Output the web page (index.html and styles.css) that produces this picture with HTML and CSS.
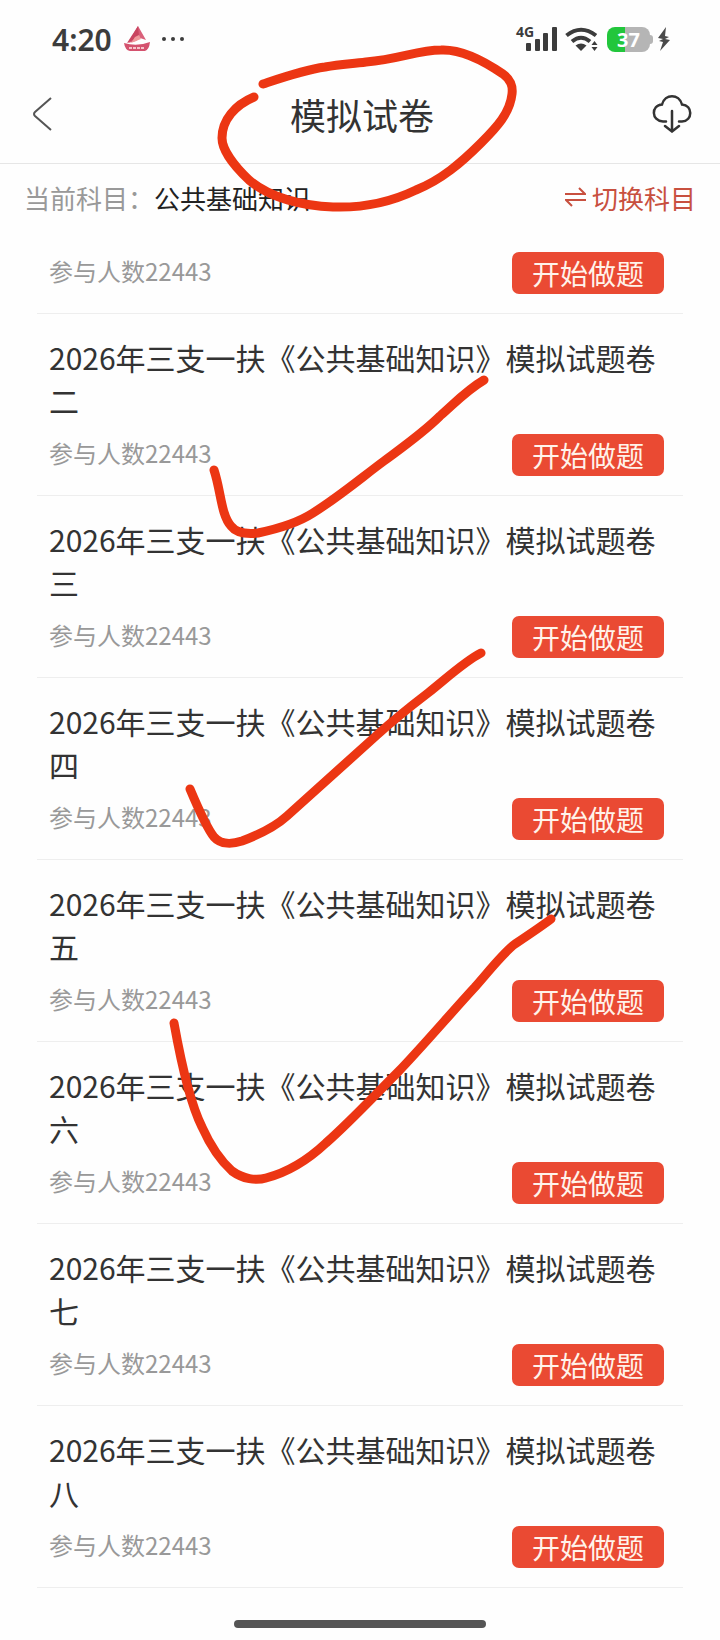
FILE: index.html
```
<!DOCTYPE html>
<html lang="zh-CN">
<head>
    <meta charset="UTF-8">
    <meta name="viewport" content="width=device-width, initial-scale=1.0">
    <title>模拟试卷</title>
    <link rel="stylesheet" href="styles.css">
</head>
<body>
    <div class="status-bar">
        <div class="status-left">
            <span class="time">4:20</span>
            <svg class="boat" width="28" height="28" viewBox="0 0 28 28">
                <path d="M15 1 L23 15 L17 13 L13 16 L5 18 Z" fill="#d9607a"/>
                <path d="M15 1 L16 11 L8 16 L4 18 Z" fill="#c94560"/>
                <path d="M12 12 L16 10 L18 14 L13 16 L8 18 Z" fill="#f09a9c"/>
                <path d="M1 18 Q14 22 27 17 Q26 25 22 26 H7 Q2 25 1 18 Z" fill="#d4526e"/>
                <path d="M6 23 H22" stroke="#f6c3c9" stroke-width="2" stroke-dasharray="3 1"/>
            </svg>
            <svg width="22" height="6" viewBox="0 0 22 6" fill="#3c3c3c">
                <circle cx="2" cy="3" r="2"/>
                <circle cx="11" cy="3" r="2"/>
                <circle cx="20" cy="3" r="2"/>
            </svg>
        </div>
        <div class="status-right">
            <div class="signal">
                <span class="network">4G</span>
                <svg width="31" height="25" viewBox="0 0 31 25" fill="#3c3c3c">
                    <rect x="0" y="16" width="5" height="8" rx="1"/>
                    <rect x="9" y="12" width="5" height="12" rx="1"/>
                    <rect x="17" y="6" width="5" height="18" rx="1"/>
                    <rect x="26" y="0" width="5" height="24" rx="1"/>
                </svg>
            </div>
            <svg width="34" height="25" viewBox="0 0 34 25">
                <path d="M1.500 8.500 Q16 -3 31 8.500 M7 14.500 Q16 7 25 14.500" fill="none" stroke="#3c3c3c" stroke-width="4"/>
                <path d="M10.500 18.500 Q16 14.500 21.500 18.500 L16 24 Z" fill="#3c3c3c"/>
                <path d="M26.500 18 L29.500 14 L32.500 18 Z M26.500 20 L29.500 24 L32.500 20 Z" fill="#3c3c3c"/>
            </svg>
            <div class="battery"><span>37</span></div>
            <svg width="12" height="24" viewBox="0 0 12 24">
                <path d="M8 0 L0 11 L5 12 L1 14 L5 15 L2 24 L12 13 L7 12 L11 10 L7 9 Z" fill="#4a4a4a"/>
            </svg>
        </div>
    </div>

    <header class="header">
        <button class="icon-btn" aria-label="返回">
            <svg width="20" height="34" viewBox="0 0 20 34">
                <path d="M19 1 L3 15 Q1 17 3 19 L19 33" fill="none" stroke="#555" stroke-width="2"/>
            </svg>
        </button>
        <h1>模拟试卷</h1>
        <button class="icon-btn" aria-label="下载">
            <svg width="40" height="38" viewBox="0 0 40 38" fill="none" stroke="#333" stroke-width="2.500" stroke-linecap="round">
                <path d="M14 26.500 H11 C-1 26 -1 10 10 9.500 C13 -1.500 27 -1.500 30 9.500 C41 10 41 26 30 26.500 H27"/>
                <path d="M20 16 V36 M13 31 L20 36.500 L27 31"/>
            </svg>
        </button>
    </header>

    <div class="subject">
        <span class="subject-label">当前科目：</span>
        <span class="subject-name">公共基础知识</span>
        <button class="switch">
            <svg width="21" height="20" viewBox="0 0 21 20" fill="none" stroke="#c8503f" stroke-width="2">
                <path d="M0 7 H20 L14 1 M21 13 H1 L7 19"/>
            </svg>
            切换科目
        </button>
    </div>

    <main class="list">
        <div class="item item-cut">
            <div class="row">
                <span class="count">参与人数22443</span>
                <button class="btn">开始做题</button>
            </div>
        </div>
        <div class="item">
            <h2>2026年三支一扶《公共基础知识》模拟试题卷二</h2>
            <div class="row">
                <span class="count">参与人数22443</span>
                <button class="btn">开始做题</button>
            </div>
        </div>
        <div class="item">
            <h2>2026年三支一扶《公共基础知识》模拟试题卷三</h2>
            <div class="row">
                <span class="count">参与人数22443</span>
                <button class="btn">开始做题</button>
            </div>
        </div>
        <div class="item">
            <h2>2026年三支一扶《公共基础知识》模拟试题卷四</h2>
            <div class="row">
                <span class="count">参与人数22443</span>
                <button class="btn">开始做题</button>
            </div>
        </div>
        <div class="item">
            <h2>2026年三支一扶《公共基础知识》模拟试题卷五</h2>
            <div class="row">
                <span class="count">参与人数22443</span>
                <button class="btn">开始做题</button>
            </div>
        </div>
        <div class="item">
            <h2>2026年三支一扶《公共基础知识》模拟试题卷六</h2>
            <div class="row">
                <span class="count">参与人数22443</span>
                <button class="btn">开始做题</button>
            </div>
        </div>
        <div class="item">
            <h2>2026年三支一扶《公共基础知识》模拟试题卷七</h2>
            <div class="row">
                <span class="count">参与人数22443</span>
                <button class="btn">开始做题</button>
            </div>
        </div>
        <div class="item">
            <h2>2026年三支一扶《公共基础知识》模拟试题卷八</h2>
            <div class="row">
                <span class="count">参与人数22443</span>
                <button class="btn">开始做题</button>
            </div>
        </div>
    </main>

    <div class="home-bar"></div>

    <!-- Red pen marks over the page -->
    <svg class="marks" viewBox="0 0 720 1640" preserveAspectRatio="xMidYMin meet">
        <path d="M263 84 C284 77 304 70 325 67 C342 64 352 64 366 62 C400 59 418 50 441 50 C462 49 487 63 503 74 C511 80 513 86 512 94 C510 113 497 127 481 143 C461 163 441 180 416 190 C389 203 361 208 333 207 C303 206 270 198 249 180 C233 165 222 149 222 138 C222 120 235 105 254 97"/>
        <path d="M214 470 C221 491 221 515 231 526 C237 534 249 534 258 533 C277 529 296 524 313 513 C340 496 361 478 384 461 C407 444 424 432 440 416 C457 401 467 390 484 380"/>
        <path d="M190 789 C198 808 206 827 214 837 C221 845 233 844 242 841 C258 835 275 827 287 816 C316 790 346 763 377 735 C398 716 411 706 428 693 C447 678 465 661 481 653"/>
        <path d="M174 1023 C181 1062 190 1103 202 1127 C211 1147 222 1162 232 1171 C243 1179 256 1181 266 1178 C289 1172 310 1158 326 1143 C351 1121 374 1096 398 1072 C423 1046 451 1013 475 987 C490 970 503 953 515 944 C530 934 542 926 551 919"/>
    </svg>
</body>
</html>
```
FILE: styles.css
```
* {
    margin: 0;
    padding: 0;
    box-sizing: border-box;
}

body {
    position: relative;
    min-height: 100vh;
    background: #fefefe;
    color: #333;
    font-family: 'Noto Sans CJK SC', sans-serif;
}

button {
    border: none;
    background: none;
    font-family: inherit;
    cursor: pointer;
}

svg {
    display: block;
}

h1,
h2 {
    font-weight: 400;
}

/* Status bar */
.status-bar {
    display: flex;
    justify-content: space-between;
    align-items: center;
    height: 78px;
    padding: 0 50px 0 52px;
    color: #3c3c3c;
    font-family: 'Noto Sans', sans-serif;
}

.status-left,
.status-right {
    display: flex;
    align-items: center;
}

.status-left {
    gap: 11px;
}

.status-right {
    gap: 8px;
}

.time {
    font-size: 30px;
    font-weight: 600;
}

.signal {
    display: flex;
    align-items: flex-start;
}

.network {
    width: 10px;
    font-size: 14px;
    line-height: 10px;
    font-weight: 700;
    white-space: nowrap;
}

.battery {
    position: relative;
    width: 43px;
    height: 25px;
    border-radius: 8px;
    background: linear-gradient(90deg, #22c63c 42%, #b5b5b5 42%);
    color: white;
    font-size: 20px;
    font-weight: 700;
    line-height: 25px;
    text-align: center;
}

.battery::after {
    content: '';
    position: absolute;
    top: 8px;
    right: -3px;
    width: 3px;
    height: 9px;
    border-radius: 0 3px 3px 0;
    background: #b5b5b5;
}

/* Header */
.header {
    display: flex;
    justify-content: space-between;
    align-items: center;
    height: 86px;
    padding: 0 28px 14px 32px;
    border-bottom: 1px solid #e6e6e6;
}

.header h1 {
    font-size: 36px;
    line-height: 48px;
}

.icon-btn {
    display: flex;
    width: 40px;
}

/* Subject */
.subject {
    display: flex;
    align-items: center;
    height: 70px;
    padding: 0 24px 4px;
    font-size: 26px;
}

.subject-label {
    color: #999;
}

.subject-name {
    color: #222;
}

.switch {
    display: flex;
    align-items: center;
    gap: 6px;
    margin-left: auto;
    color: #c8503f;
    font-size: 26px;
}

/* List */
.list {
    padding: 0 37px;
}

.item {
    padding: 22px 19px 19px 12px;
    border-bottom: 1px solid #eee;
}

.item-cut {
    padding-top: 18px;
}

.item h2 {
    margin-bottom: 12px;
    font-size: 30px;
    line-height: 43px;
}

.row {
    display: flex;
    justify-content: space-between;
    align-items: center;
    height: 42px;
}

.count {
    color: #999;
    font-size: 24px;
    line-height: 36px;
    padding-bottom: 4px;
}

.btn {
    height: 42px;
    padding: 0 20px;
    border-radius: 7px;
    background: #ea4a33;
    color: #fff3ea;
    font-size: 28px;
    line-height: 42px;
}

.home-bar {
    width: 35%;
    height: 8px;
    margin: 32px auto 11px;
    border-radius: 4px;
    background: #555;
}

/* Pen marks */
.marks {
    position: absolute;
    top: 0;
    left: 0;
    width: 100%;
    fill: none;
    stroke: #ec3613;
    stroke-width: 9;
    stroke-linecap: round;
    stroke-linejoin: round;
    pointer-events: none;
}
```
